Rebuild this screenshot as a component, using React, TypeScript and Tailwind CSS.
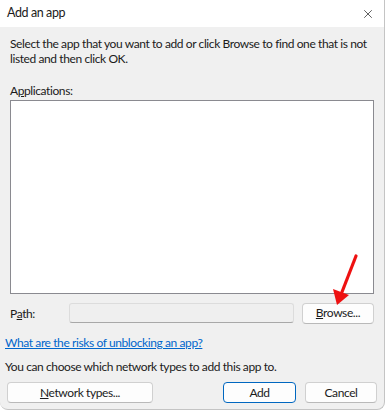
import { X } from "lucide-react";

function Btn({ children, primary, className }: { children: React.ReactNode; primary?: boolean; className?: string }) {
    return (
        <button
            type="button"
            className={
                "h-[21px] rounded-[4px] bg-[#fdfdfd] text-[12px] leading-none text-[#1b1b1b] " +
                (primary ? "border border-[#0067c0] " : "border border-[#d0d0d0] border-b-[#b9b9b9] ") +
                (className ?? "")
            }
        >
            {children}
        </button>
    );
}

export default function App() {
    return (
        <div className="relative w-[386px] h-[411px] bg-white font-['Lato',sans-serif] text-[12px] tracking-[-0.4px] text-[#1b1b1b]">
            <div className="w-[385px] h-[410px] bg-[#f0f0f0] border-r border-b border-[#c4c4c4] rounded-br-[8px] rounded-bl-[8px] overflow-hidden flex flex-col">
                <div className="h-[27px] bg-white flex items-center justify-between pl-[7px] pr-[9px] shrink-0">
                    <span className="text-[12.5px]">Add an app</span>
                    <X className="w-[14px] h-[14px] text-[#1b1b1b]" strokeWidth={1.2} />
                </div>

                <div className="px-[10px] pt-[9px] leading-[15px]">
                    <p>Select the app that you want to add or click Browse to find one that is not listed and then click OK.</p>
                    <p className="mt-[17px]">
                        A<span className="underline">p</span>plications:
                    </p>
                    <div className="mt-[2px] h-[194px] bg-white border border-[#8a8a90]" />
                    <div className="mt-[9px] flex items-center h-[20px]">
                        <span className="w-[59px]">
                            P<span className="underline">a</span>th:
                        </span>
                        <div className="w-[225px] h-[20px] bg-[#efefef] border border-[#dcdcdc] border-b-[#a8a8a8] rounded-[3px]" />
                        <Btn className="ml-[8px] w-[72px] h-[20px]">
                            <span className="underline">B</span>rowse...
                        </Btn>
                    </div>
                </div>

                <div className="px-[5px] leading-[15px]">
                    <a className="block mt-[12px] text-[#0066cc] underline">What are the risks of unblocking an app?</a>
                    <p className="mt-[9px]">You can choose which network types to add this app to.</p>
                    <div className="mt-[8px] flex items-center">
                        <Btn className="ml-[2px] w-[146px]">
                            <span className="underline">N</span>etwork types...
                        </Btn>
                        <Btn primary className="ml-auto w-[73px]">
                            Add
                        </Btn>
                        <Btn className="ml-[9px] mr-[2px] w-[72px]">Cancel</Btn>
                    </div>
                </div>
            </div>

            <svg className="absolute left-[330px] top-[252px]" width="30" height="56" viewBox="0 0 30 56">
                <line x1="26" y1="4" x2="12" y2="40" stroke="#ee1111" strokeWidth="3.2" strokeLinecap="round" />
                <polygon points="3,37 19,43 7,53" fill="#ee1111" />
            </svg>
        </div>
    );
}
